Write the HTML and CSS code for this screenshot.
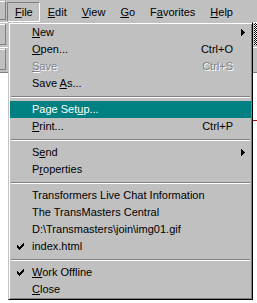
FILE: index.html
```html
<!DOCTYPE html>
<html lang="en">
<head>
    <meta charset="UTF-8">
    <meta name="viewport" content="width=device-width, initial-scale=1.0">
    <title>File menu</title>
    <link rel="stylesheet" href="styles.css">
</head>
<body>
    <div class="window">
        <div class="rebar">
            <div class="band band-menu">
                <div class="grip"></div>
                <ul class="menubar">
                    <li class="open"><u>F</u>ile</li>
                    <li><u>E</u>dit</li>
                    <li><u>V</u>iew</li>
                    <li><u>G</u>o</li>
                    <li>F<u>a</u>vorites</li>
                    <li><u>H</u>elp</li>
                </ul>
            </div>
            <div class="band band-tools">
                <div class="grip"></div>
                <div class="throbber"></div>
            </div>
            <div class="band band-address">
                <div class="grip"></div>
            </div>
        </div>
        <div class="page">
            <div class="page-mark"></div>
        </div>

        <!-- menu Arquivo aberto -->
        <div class="dropdown">
            <div class="item"><span class="check"></span><span class="label"><u>N</u>ew</span><span class="key"></span><span class="arrow"><svg width="4" height="7" viewBox="0 0 4 7"><path d="M0 0h1v7h-1z M1 1h1v5h-1z M2 2h1v3h-1z M3 3h1v1h-1z" fill="#000"/></svg></span></div>
            <div class="item"><span class="check"></span><span class="label"><u>O</u>pen...</span><span class="key">Ctrl+O</span><span class="arrow"></span></div>
            <div class="item disabled"><span class="check"></span><span class="label"><u>S</u>ave</span><span class="key">Ctrl+S</span><span class="arrow"></span></div>
            <div class="item"><span class="check"></span><span class="label">Save <u>A</u>s...</span><span class="key"></span><span class="arrow"></span></div>
            <div class="sep"></div>
            <div class="item active"><span class="check"></span><span class="label">Page Set<u>u</u>p...</span><span class="key"></span><span class="arrow"></span></div>
            <div class="item"><span class="check"></span><span class="label"><u>P</u>rint...</span><span class="key">Ctrl+P</span><span class="arrow"></span></div>
            <div class="sep"></div>
            <div class="item"><span class="check"></span><span class="label">S<u>e</u>nd</span><span class="key"></span><span class="arrow"><svg width="4" height="7" viewBox="0 0 4 7"><path d="M0 0h1v7h-1z M1 1h1v5h-1z M2 2h1v3h-1z M3 3h1v1h-1z" fill="#000"/></svg></span></div>
            <div class="item"><span class="check"></span><span class="label">P<u>r</u>operties</span><span class="key"></span><span class="arrow"></span></div>
            <div class="sep"></div>
            <div class="item"><span class="check"></span><span class="label">Transformers Live Chat Information</span><span class="key"></span><span class="arrow"></span></div>
            <div class="item"><span class="check"></span><span class="label">The TransMasters Central</span><span class="key"></span><span class="arrow"></span></div>
            <div class="item"><span class="check"></span><span class="label">D:\Transmasters\join\img01.gif</span><span class="key"></span><span class="arrow"></span></div>
            <div class="item"><span class="check"><svg width="7" height="7" viewBox="0 0 7 7"><path d="M6 0h1v1h-1z M5 1h2v1h-2z M0 2h1v1h-1z M4 2h3v1h-3z M0 3h2v1h-2z M3 3h3v1h-3z M0 4h5v1h-5z M1 5h3v1h-3z M2 6h1v1h-1z" fill="#000"/></svg></span><span class="label">index.html</span><span class="key"></span><span class="arrow"></span></div>
            <div class="sep"></div>
            <div class="item"><span class="check"><svg width="7" height="7" viewBox="0 0 7 7"><path d="M6 0h1v1h-1z M5 1h2v1h-2z M0 2h1v1h-1z M4 2h3v1h-3z M0 3h2v1h-2z M3 3h3v1h-3z M0 4h5v1h-5z M1 5h3v1h-3z M2 6h1v1h-1z" fill="#000"/></svg></span><span class="label"><u>W</u>ork Offline</span><span class="key"></span><span class="arrow"></span></div>
            <div class="item"><span class="check"></span><span class="label"><u>C</u>lose</span><span class="key"></span><span class="arrow"></span></div>
        </div>
    </div>
</body>
</html>
```

FILE: styles.css
```css
body {
    margin: 0;
    background-color: #fff;
    font-family: "Liberation Sans", Arial, sans-serif;
    font-size: 11px;
    color: #000;
}
.window {
    position: relative; /* para o menu aberto */
    width: 257px;
    height: 303px;
    overflow: hidden;
}
.rebar {
    background-color: #c0c0c0;
    border-bottom: 1px solid #808080;
}
.band {
    display: flex;
    box-sizing: border-box;
    border-top: 1px solid #fff;
}
.band-menu {
    height: 22px;
    border-top: 0;
}
.band-tools {
    height: 25px;
}
.band-address {
    height: 25px;
}
.grip {
    width: 6px;
    box-sizing: border-box;
    margin: 1px 1px 2px 0;
    border-right: 1px solid #808080;
    border-bottom: 1px solid #808080;
    box-shadow: inset 0 1px #fff;
}
.menubar {
    list-style: none;
    margin: 0;
    padding: 2px 0 0 0;
    display: flex;
}
.menubar li {
    box-sizing: border-box;
    height: 20px;
    padding: 0 6px 0 7px;
    line-height: 19px;
    border: 1px solid transparent;
}
.menubar li.open {
    border-color: #808080 #fff #fff #808080;
}
.throbber {
    margin-left: auto;
    width: 3px;
    height: 22px;
    background: repeating-conic-gradient(#000 0 25%, #fff 0 50%) 0 0 / 2px 2px;
}
.page {
    display: flex;
    flex-direction: column;
}
.page-mark {
    margin: 47px 0 0 auto;
    width: 4px;
    height: 1px;
    background-color: #c00000;
}
.dropdown {
    position: absolute;
    top: 22px;
    left: 8px;
    width: 245px;
    box-sizing: border-box;
    padding: 1px;
    background-color: #c0c0c0;
    border: 1px solid;
    border-color: #c0c0c0 #000 #000 #c0c0c0;
    box-shadow: inset 1px 1px #fff, inset -1px -1px #808080;
}
.item {
    display: grid;
    grid-template-columns: 22px 1fr auto 18px;
    align-items: center;
    height: 17px;
    line-height: 17px;
    white-space: nowrap;
}
.item .check {
    display: flex;
    padding-left: 7px;
}
.item .arrow {
    display: flex;
    padding-left: 8px;
}
.item.active {
    background-color: #008080;
    color: #fff;
}
.item.disabled {
    color: #808080;
    text-shadow: 1px 1px 0 #fff;
}
.sep {
    height: 9px;
    box-sizing: border-box;
    padding-top: 4px;
    margin: 0 1px;
}
.sep::before {
    content: "";
    display: block;
    height: 1px;
    background-color: #808080;
    border-bottom: 1px solid #fff;
}
```
